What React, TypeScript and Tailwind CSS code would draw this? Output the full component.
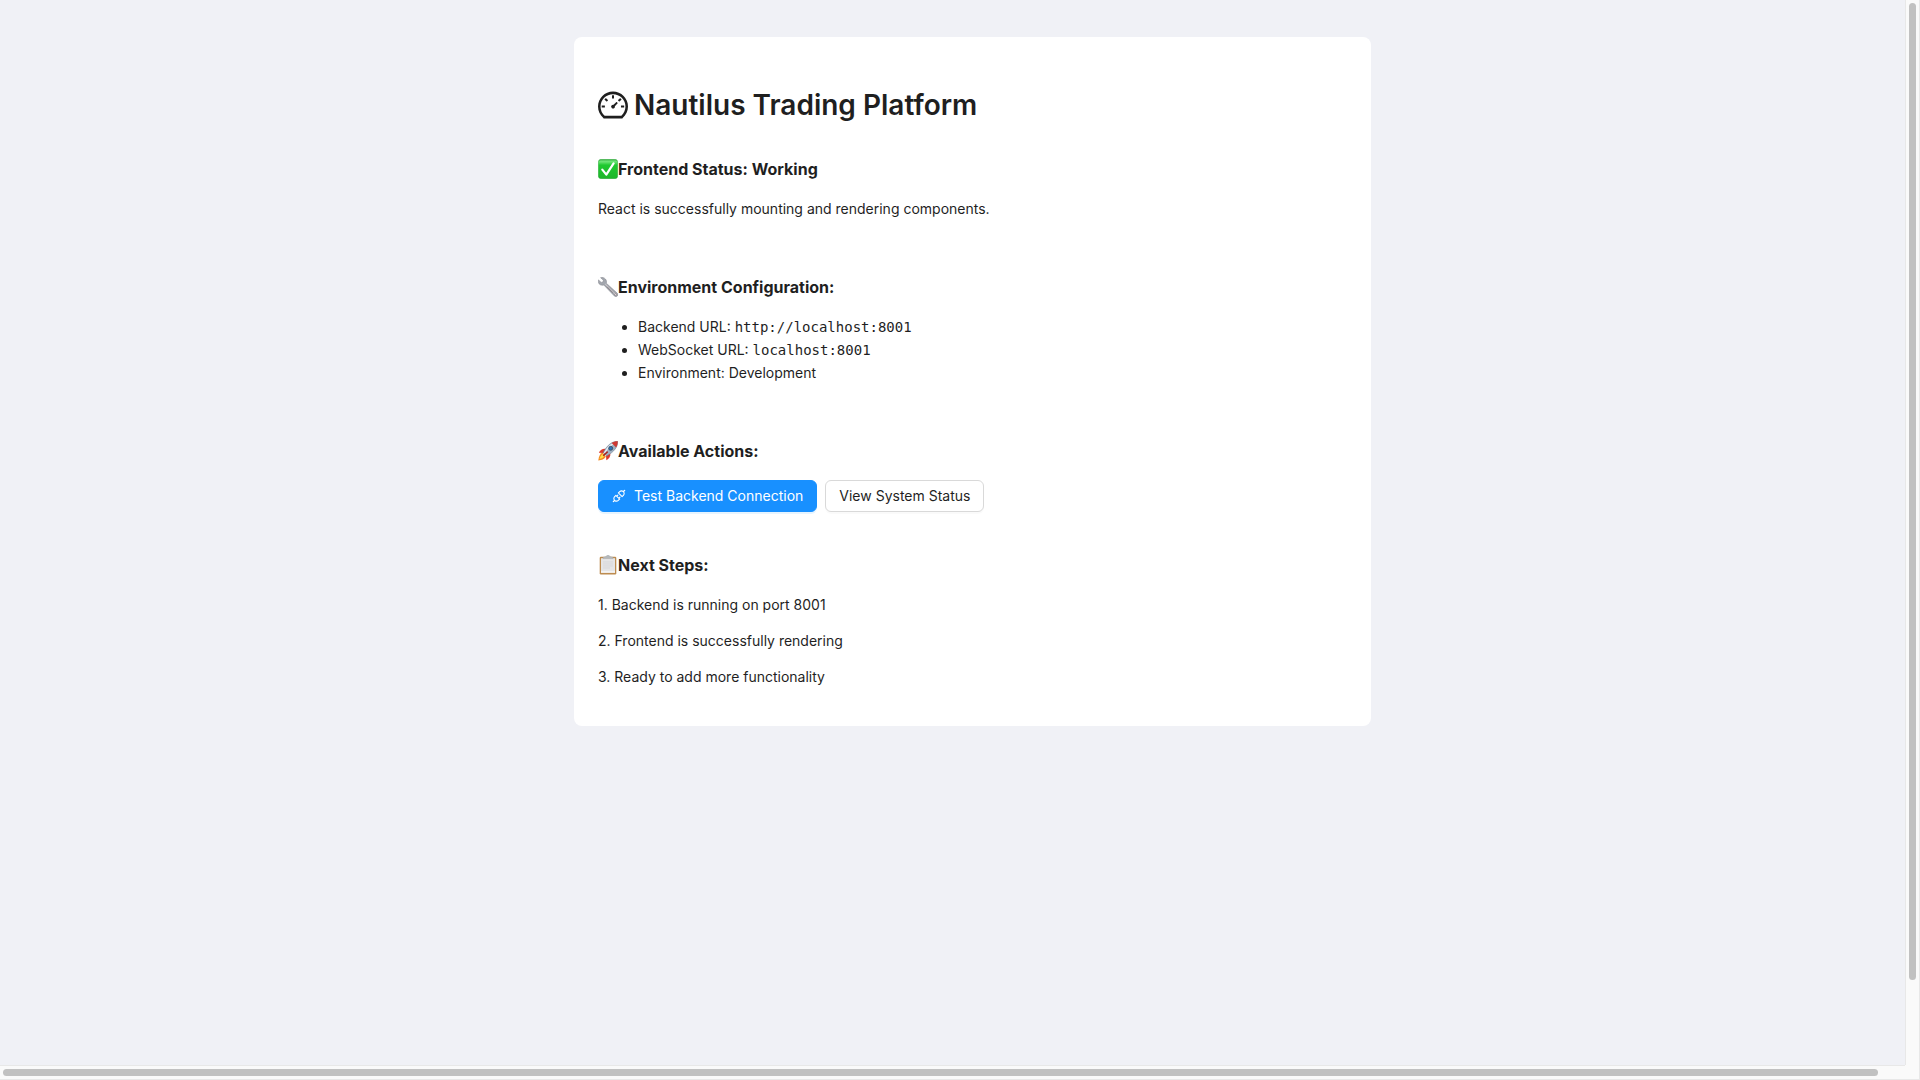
import type { ReactNode } from 'react';
import { AiOutlineApi, AiOutlineDashboard } from 'react-icons/ai';

function CheckEmoji() {
  return (
    <svg viewBox="0 0 20 20" className="size-5 shrink-0" aria-hidden="true">
      <defs>
        <linearGradient id="check-fill" x1="0" y1="0" x2="0" y2="1">
          <stop offset="0" stopColor="#3fb54a" />
          <stop offset="0.12" stopColor="#6fe577" />
          <stop offset="0.3" stopColor="#1fc92f" />
          <stop offset="1" stopColor="#1fb52b" />
        </linearGradient>
      </defs>
      <rect x="0.3" y="0.3" width="19.4" height="19.4" rx="3" fill="url(#check-fill)" stroke="#2fa53a" strokeWidth="0.5" />
      <path d="M4.3 10.6 8.3 15.6 15.6 4.4" fill="none" stroke="#fff" strokeWidth="2.2" strokeLinecap="round" strokeLinejoin="round" />
    </svg>
  );
}

function WrenchEmoji() {
  return (
    <svg viewBox="0 0 20 20" className="size-5 shrink-0" aria-hidden="true">
      <path
        d="M2.6.7 5.4 3.2 5 5 3.2 5.4.5 2.9C0 5 .6 7 2.3 7.8c1.300.6 2.500.5 3.500.2L16.300 18.900c.900.900 2.200.900 3 .1.800-.8.700-2-.2-2.900L8.300 6.200c.4-1.400.2-3-.9-4.200C6.100.5 4.200.1 2.600.7Z"
        fill="#a3a7ae"
        stroke="#7c7f87"
        strokeWidth="0.5"
      />
      <path d="M7.200 7 17.500 17.300" stroke="#d3cdd0" strokeWidth="1" />
      <path d="M9 9.700 15 15.800" stroke="#76666a" strokeWidth="0.6" />
      <circle cx="17.700" cy="17.500" r="0.9" fill="#fff" stroke="#735b60" strokeWidth="0.5" />
    </svg>
  );
}

function RocketEmoji() {
  return (
    <svg viewBox="0 0 20 20" className="size-5 shrink-0" aria-hidden="true">
      <path d="M4.500 11.500C2 12.500.7 15.500.3 19.500c3.500-.4 6.700-1.500 7.500-4.200Z" fill="#f58a1f" />
      <path d="M4.500 13c-1.500 1-2.500 3-3 5 2-.5 4-1.500 4.800-3Z" fill="#ffe04a" />
      <path d="M7.500 7.800C4.500 7.500 2.300 9 .8 11.800l5 .3Z" fill="#dd3a2c" />
      <path d="M12.300 12.500c.4 3-1.200 5.300-4 6.800l-.3-5Z" fill="#dd3a2c" />
      <path d="M19.700.3C14.500.2 9.500 3.500 5.200 11.500l3.400 3.400C16.500 10.800 19.900 5.500 19.700.3Z" fill="#9fb2c4" stroke="#5d6f84" strokeWidth="0.5" />
      <path d="M18.500 1.500C13.500 2.500 9.300 6.500 6.500 12" stroke="#e6edf3" strokeWidth="1.500" fill="none" />
      <path d="M19.700.3c-2.200-.1-4.200.5-6.100 1.600l4.500 4.500C19.200 4.500 19.800 2.400 19.700.3Z" fill="#cf3a34" />
      <circle cx="12.700" cy="7.300" r="2" fill="#2c72b5" stroke="#36475c" strokeWidth="0.8" />
      <path d="m5.200 14.800 4.500-4.200" stroke="#a92520" strokeWidth="1.500" />
    </svg>
  );
}

function ClipboardEmoji() {
  return (
    <svg viewBox="0 0 20 20" className="size-5 shrink-0" aria-hidden="true">
      <rect x="1.700" y="1.800" width="16.600" height="17.700" rx="1.200" fill="#bd8c50" />
      <rect x="3" y="3.200" width="14" height="14.500" fill="#e5e5e6" />
      <path d="M5 7h10M5 9h10M5 11h10M5 13h7" stroke="#d2d2d5" strokeWidth="0.7" />
      <path d="M3 16.300h14v1.400H3Z" fill="#fafafa" />
      <path d="M5 3.600V2.300L8 1.500C8.500-.1 11.500-.1 12 1.500l3 .8v1.300Z" fill="#b4b8bb" stroke="#999da0" strokeWidth="0.3" />
    </svg>
  );
}

function SectionHeading({ icon, children }: { icon: ReactNode; children: ReactNode }) {
  return (
    <h3 className="mb-4 flex items-center text-base leading-[26px] font-bold">
      {icon}
      {children}
    </h3>
  );
}

const steps = [
  '1. Backend is running on port 8001',
  '2. Frontend is successfully rendering',
  '3. Ready to add more functionality',
];

export default function App() {
  return (
    <div className="flex h-screen flex-col overflow-hidden bg-[#f0f1f6] font-['Inter',sans-serif] text-sm leading-[22px] text-[#1f1f1f]">
      <div className="flex min-h-0 flex-1">
        <main className="min-w-0 flex-1 overflow-hidden pt-[37px] pl-10">
          <div className="mx-auto w-full max-w-[797px] rounded-lg bg-white px-6 pt-[49px] pb-[38px]">
            <h1 className="mb-8 flex items-center gap-1.5 text-[28px] leading-[38px] font-semibold">
              <AiOutlineDashboard viewBox="64 64 896 896" className="size-[30px]" aria-hidden="true" />
              Nautilus Trading Platform
            </h1>

            <section className="mb-[54px]">
              <SectionHeading icon={<CheckEmoji />}>Frontend Status: Working</SectionHeading>
              <p>React is successfully mounting and rendering components.</p>
            </section>

            <section className="mb-[54px]">
              <SectionHeading icon={<WrenchEmoji />}>Environment Configuration:</SectionHeading>
              <ul className="list-disc space-y-px pl-10">
                <li>
                  Backend URL: <code className="font-['DejaVu_Sans_Mono',monospace] text-sm leading-[22px]">http://localhost:8001</code>
                </li>
                <li>
                  WebSocket URL: <code className="font-['DejaVu_Sans_Mono',monospace] text-sm leading-[22px]">localhost:8001</code>
                </li>
                <li>Environment: Development</li>
              </ul>
            </section>

            <section className="mb-10">
              <SectionHeading icon={<RocketEmoji />}>Available Actions:</SectionHeading>
              <div className="flex gap-2">
                <button type="button" className="flex h-8 items-center gap-2 rounded-md border border-[#1890ff] bg-[#1890ff] px-[13px] text-white shadow-[0_2px_0_rgba(5,145,255,0.1)]">
                  <AiOutlineApi viewBox="64 64 896 896" className="size-3.5" aria-hidden="true" />
                  Test Backend Connection
                </button>
                <button type="button" className="h-8 rounded-md border border-[#d9d9d9] bg-white px-[13px] shadow-[0_2px_0_rgba(0,0,0,0.02)]">
                  View System Status
                </button>
              </div>
            </section>

            <section>
              <SectionHeading icon={<ClipboardEmoji />}>Next Steps:</SectionHeading>
              <div className="flex flex-col gap-3.5">
                {steps.map((step) => (
                  <p key={step}>{step}</p>
                ))}
              </div>
            </section>
          </div>
        </main>
        <div className="w-[15px] border-x border-[#e8e8e8] bg-[#fafafa] px-[3px] pt-[3px]" aria-hidden="true">
          <div className="h-[92%] rounded-full bg-[#c1c1c1]" />
        </div>
      </div>
      <div className="flex h-[15px] bg-[#fafafa]" aria-hidden="true">
        <div className="flex-1 border-y border-[#e8e8e8] py-[3px] pl-[3px]">
          <div className="h-full w-[98.600%] rounded-full bg-[#c1c1c1]" />
        </div>
        <div className="w-[15px] border-r border-b border-[#e8e8e8]" />
      </div>
    </div>
  );
}
